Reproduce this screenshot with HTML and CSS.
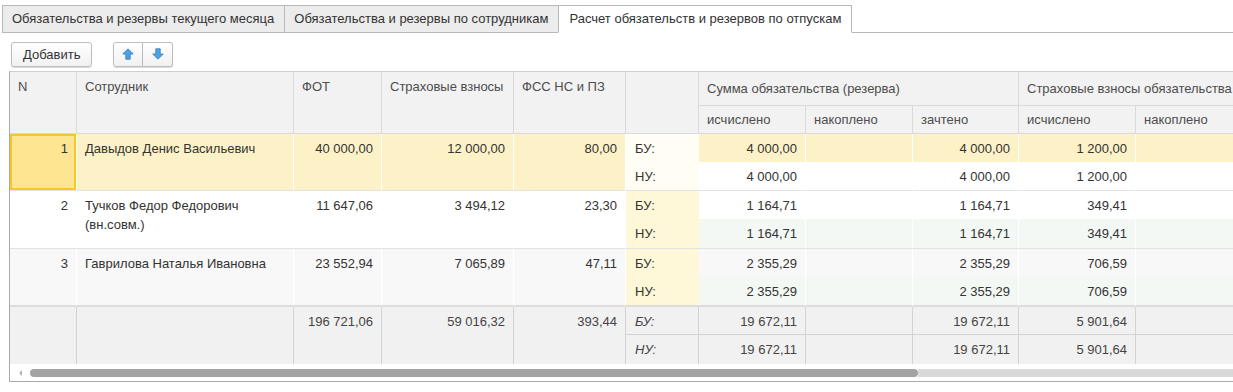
FILE: index.html
```html
<!DOCTYPE html>
<html lang="ru">
<head>
    <meta charset="UTF-8">
    <title>Расчет обязательств и резервов по отпускам</title>
    <link rel="stylesheet" href="styles.css">
</head>
<body>
    <div class="tabs">
        <div class="tab">Обязательства и резервы текущего месяца</div>
        <div class="tab">Обязательства и резервы по сотрудникам</div>
        <div class="tab active">Расчет обязательств и резервов по отпускам</div>
        <div class="tab-rest"></div>
    </div>

    <div class="toolbar">
        <button class="btn">Добавить</button>
        <div class="btn-group">
            <button class="btn icon">
                <svg width="12" height="12" viewBox="0 0 12 12"><path d="M6 0.8 L11.2 6 H8.2 V11.2 H3.8 V6 H0.8 Z" fill="#4fa3e3" stroke="#2a7cc3" stroke-width="0.8"/></svg>
            </button>
            <button class="btn icon">
                <svg width="12" height="12" viewBox="0 0 12 12"><path d="M6 11.2 L11.2 6 H8.2 V0.8 H3.8 V6 H0.8 Z" fill="#4fa3e3" stroke="#2a7cc3" stroke-width="0.8"/></svg>
            </button>
        </div>
    </div>

    <div class="grid-wrap">
        <table class="grid">
            <colgroup>
                <col style="width:67px">
                <col style="width:217px">
                <col style="width:88px">
                <col style="width:132px">
                <col style="width:112px">
                <col style="width:73px">
                <col style="width:107px">
                <col style="width:107px">
                <col style="width:106px">
                <col style="width:117px">
                <col style="width:130px">
            </colgroup>
            <thead>
                <tr class="h1">
                    <th rowspan="2" class="top">N</th>
                    <th rowspan="2" class="top">Сотрудник</th>
                    <th rowspan="2" class="top">ФОТ</th>
                    <th rowspan="2" class="top">Страховые взносы</th>
                    <th rowspan="2" class="top">ФСС НС и ПЗ</th>
                    <th rowspan="2"></th>
                    <th colspan="3">Сумма обязательства (резерва)</th>
                    <th colspan="2" class="clip">Страховые взносы обязательства</th>
                </tr>
                <tr class="h2">
                    <th>исчислено</th>
                    <th>накоплено</th>
                    <th>зачтено</th>
                    <th>исчислено</th>
                    <th>накоплено</th>
                </tr>
            </thead>
            <tbody class="g1 current">
                <tr>
                    <td rowspan="2" class="num sel end">1</td>
                    <td rowspan="2" class="end">Давыдов Денис Васильевич</td>
                    <td rowspan="2" class="num end">40 000,00</td>
                    <td rowspan="2" class="num end">12 000,00</td>
                    <td rowspan="2" class="num end">80,00</td>
                    <td class="lbl">БУ:</td>
                    <td class="num v">4 000,00</td>
                    <td class="num v"></td>
                    <td class="num v">4 000,00</td>
                    <td class="num v">1 200,00</td>
                    <td class="num v"></td>
                </tr>
                <tr class="nu">
                    <td class="lbl end">НУ:</td>
                    <td class="num v end">4 000,00</td>
                    <td class="num v end"></td>
                    <td class="num v end">4 000,00</td>
                    <td class="num v end">1 200,00</td>
                    <td class="num v end"></td>
                </tr>
            </tbody>
            <tbody class="g2">
                <tr>
                    <td rowspan="2" class="num end">2</td>
                    <td rowspan="2" class="end">Тучков Федор Федорович<br>(вн.совм.)</td>
                    <td rowspan="2" class="num end">11 647,06</td>
                    <td rowspan="2" class="num end">3 494,12</td>
                    <td rowspan="2" class="num end">23,30</td>
                    <td class="lbl">БУ:</td>
                    <td class="num v">1 164,71</td>
                    <td class="num v"></td>
                    <td class="num v">1 164,71</td>
                    <td class="num v">349,41</td>
                    <td class="num v"></td>
                </tr>
                <tr class="nu">
                    <td class="lbl end">НУ:</td>
                    <td class="num v end">1 164,71</td>
                    <td class="num v end"></td>
                    <td class="num v end">1 164,71</td>
                    <td class="num v end">349,41</td>
                    <td class="num v end"></td>
                </tr>
            </tbody>
            <tbody class="g3">
                <tr>
                    <td rowspan="2" class="num end">3</td>
                    <td rowspan="2" class="end">Гаврилова Наталья Ивановна</td>
                    <td rowspan="2" class="num end">23 552,94</td>
                    <td rowspan="2" class="num end">7 065,89</td>
                    <td rowspan="2" class="num end">47,11</td>
                    <td class="lbl">БУ:</td>
                    <td class="num v">2 355,29</td>
                    <td class="num v"></td>
                    <td class="num v">2 355,29</td>
                    <td class="num v">706,59</td>
                    <td class="num v"></td>
                </tr>
                <tr class="nu">
                    <td class="lbl end">НУ:</td>
                    <td class="num v end">2 355,29</td>
                    <td class="num v end"></td>
                    <td class="num v end">2 355,29</td>
                    <td class="num v end">706,59</td>
                    <td class="num v end"></td>
                </tr>
            </tbody>
            <tfoot>
                <tr>
                    <td rowspan="2"></td>
                    <td rowspan="2"></td>
                    <td rowspan="2" class="num">196 721,06</td>
                    <td rowspan="2" class="num">59 016,32</td>
                    <td rowspan="2" class="num">393,44</td>
                    <td class="lbl mid">БУ:</td>
                    <td class="num mid">19 672,11</td>
                    <td class="num mid"></td>
                    <td class="num mid">19 672,11</td>
                    <td class="num mid">5 901,64</td>
                    <td class="num mid"></td>
                </tr>
                <tr>
                    <td class="lbl">НУ:</td>
                    <td class="num">19 672,11</td>
                    <td class="num"></td>
                    <td class="num">19 672,11</td>
                    <td class="num">5 901,64</td>
                    <td class="num"></td>
                </tr>
            </tfoot>
        </table>
        <div class="hscroll">
            <span class="arrow-left"></span>
            <span class="thumb"></span>
            <span class="track"></span>
        </div>
    </div>
</body>
</html>
```
FILE: styles.css
```css
body {
    margin: 0;
    font-family: "Liberation Sans", Arial, sans-serif;
    font-size: 13px;
    color: #333;
    background: #fff;
    overflow: hidden;
}

/* tabs */
.tabs {
    display: flex;
    align-items: flex-end;
    padding: 5px 0 0 2px;
    height: 28px;
}

.tab {
    box-sizing: border-box;
    height: 28px;
    padding: 0 10px 0 9px;
    line-height: 26px;
    background: #ececec;
    border: 1px solid #b8b8b8;
    border-right: none;
    color: #333;
    white-space: nowrap;
}

.tab.active {
    background: #fff;
    border-right: 1px solid #b8b8b8;
    border-bottom-color: #fff;
    padding: 0 10px 0 10px;
}

.tab-rest {
    width: 382px;
    height: 28px;
    box-sizing: border-box;
    border-bottom: 1px solid #b8b8b8;
}

/* toolbar */
.toolbar {
    display: flex;
    align-items: center;
    gap: 21px;
    padding: 8px 0 0 11px;
    height: 26px;
}

.btn {
    box-sizing: border-box;
    height: 25px;
    padding: 0 11px;
    font-family: inherit;
    font-size: 13px;
    color: #333;
    background: linear-gradient(#ffffff, #f1f1f1);
    border: 1px solid #bdbdbd;
    border-radius: 3px;
    box-shadow: 0 1px 1px rgba(0, 0, 0, 0.15);
}

.btn-group {
    display: flex;
}

.btn.icon {
    width: 30px;
    padding: 0;
    display: flex;
    align-items: center;
    justify-content: center;
}

.btn-group .btn.icon:first-child {
    border-radius: 3px 0 0 3px;
}

.btn-group .btn.icon:last-child {
    border-left: none;
    border-radius: 0 3px 3px 0;
}

/* grid */
.grid-wrap {
    margin: 4px 0 0 9px;
    width: 1224px;
    overflow: hidden;
    border-left: 1px solid #a9a9a9;
    border-top: 1px solid #cfcfcf;
    border-bottom: 1px solid #a9a9a9;
}

.grid {
    table-layout: fixed;
    width: 1256px;
    border-collapse: separate;
    border-spacing: 0;
}

.grid th,
.grid td {
    box-sizing: border-box;
    padding: 0 8px;
    white-space: nowrap;
    overflow: hidden;
    font-weight: normal;
    text-align: left;
}

.grid th {
    background: #f2f2f2;
    color: #4d4d4d;
    border-right: 1px solid #dadada;
    border-bottom: 1px solid #dadada;
}

.grid th.top {
    vertical-align: top;
    padding-top: 7px;
}

.grid th.clip {
    text-overflow: clip;
}

.grid .h1 {
    height: 34px;
}

.grid .h2 {
    height: 28px;
}

.grid tbody tr {
    height: 28px;
}

.grid tbody tr.nu {
    height: 29px;
}

.grid tbody.g2 tr.nu,
.grid tbody.g3 tr.nu {
    height: 30px;
}

.grid td {
    border-right: 1px solid #fff;
    vertical-align: top;
    padding-top: 5px;
    line-height: 19px;
}

.grid tbody td.end {
    border-bottom: 1px solid #e2e2e2;
}

.grid .num {
    text-align: right;
}

.grid td.lbl {
    padding-left: 9px;
    background: #fef8d8;
    border-right: none;
}

/* current row */
.current td {
    background: #fdf2c7;
}

.current td.sel {
    background: #fde592;
    box-shadow: inset 0 0 0 2px #f7c72a;
}

.current td.lbl {
    background: #fffdf4;
}

.current .nu td.v {
    background: #fff;
}

.g2 td {
    background: #fff;
}

.g3 td {
    background: #f8f8f8;
}

.g2 .nu td.v,
.g3 .nu td.v {
    background: #f3f8f4;
}

.g2 td.lbl,
.g3 td.lbl {
    background: #fef8d8;
}

.grid tbody.g3 td.end {
    border-bottom: 2px solid #dcdcdc;
}

/* totals */
.grid tfoot tr {
    height: 28px;
}

.grid tfoot tr + tr {
    height: 29px;
}

.grid tfoot td {
    background: #f1f1f1;
    border-right: 1px solid #d3d3d3;
    color: #444;
}

.grid tfoot td.mid {
    border-bottom: 1px solid #d3d3d3;
}

.grid tfoot td.lbl {
    font-style: italic;
    background: #f1f1f1;
    border-right: 1px solid #d3d3d3;
}

/* horizontal scrollbar */
.hscroll {
    display: flex;
    align-items: center;
    height: 17px;
    background: #fff;
}

.arrow-left {
    width: 0;
    height: 0;
    margin: 0 8px 0 9px;
    border-top: 3px solid transparent;
    border-bottom: 3px solid transparent;
    border-right: 3px solid #b5b5b5;
}

.thumb {
    width: 888px;
    height: 8px;
    background: #a3a3a3;
    border-radius: 4px;
}

.track {
    flex: 1;
    height: 8px;
    background: #d9d9d9;
}
```
